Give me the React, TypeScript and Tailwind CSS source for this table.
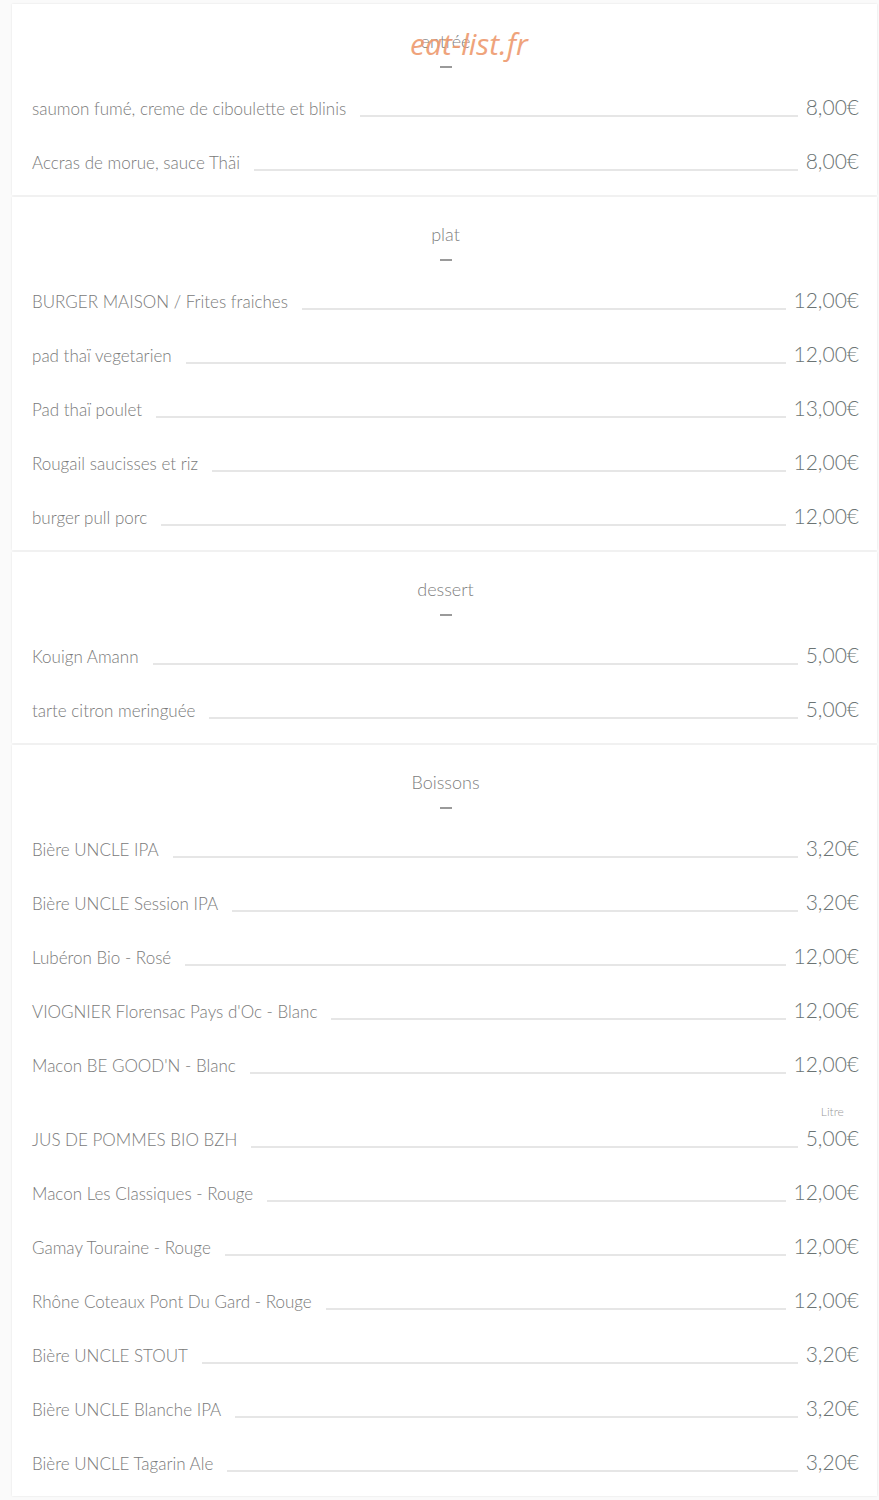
import React from "react";

type Item = { name: string; price: string; note?: string };
type Section = { title: string; items: Item[] };

const sections: Section[] = [
  {
    title: "entrée",
    items: [
      { name: "saumon fumé, creme de ciboulette et blinis", price: "8,00€" },
      { name: "Accras de morue, sauce Thäi", price: "8,00€" },
    ],
  },
  {
    title: "plat",
    items: [
      { name: "BURGER MAISON / Frites fraiches", price: "12,00€" },
      { name: "pad thaï vegetarien", price: "12,00€" },
      { name: "Pad thaï poulet", price: "13,00€" },
      { name: "Rougail saucisses et riz", price: "12,00€" },
      { name: "burger pull porc", price: "12,00€" },
    ],
  },
  {
    title: "dessert",
    items: [
      { name: "Kouign Amann", price: "5,00€" },
      { name: "tarte citron meringuée", price: "5,00€" },
    ],
  },
  {
    title: "Boissons",
    items: [
      { name: "Bière UNCLE IPA", price: "3,20€" },
      { name: "Bière UNCLE Session IPA", price: "3,20€" },
      { name: "Lubéron Bio - Rosé", price: "12,00€" },
      { name: "VIOGNIER Florensac Pays d'Oc - Blanc", price: "12,00€" },
      { name: "Macon BE GOOD'N - Blanc", price: "12,00€" },
      { name: "JUS DE POMMES BIO BZH", price: "5,00€", note: "Litre" },
      { name: "Macon Les Classiques - Rouge", price: "12,00€" },
      { name: "Gamay Touraine - Rouge", price: "12,00€" },
      { name: "Rhône Coteaux Pont Du Gard - Rouge", price: "12,00€" },
      { name: "Bière UNCLE STOUT", price: "3,20€" },
      { name: "Bière UNCLE Blanche IPA", price: "3,20€" },
      { name: "Bière UNCLE Tagarin Ale", price: "3,20€" },
    ],
  },
];

function Row({ item }: { item: Item }) {
  return (
    <div
      className={`flex items-end pb-[17px] ${item.note ? "h-[74px]" : "h-[54px]"}`}
    >
      <span className="text-[17px] leading-[20px] text-[#7a7a7a] font-light whitespace-nowrap">
        {item.name}
      </span>
      <div className="flex-1 h-[2px] bg-[#e6e6e6] mb-[2px] ml-[14px] mr-[8px]" />
      <div className="flex flex-col items-center">
        {item.note && (
          <span className="text-[12px] leading-[14px] text-[#9a9a9a] font-light mb-[7px]">
            {item.note}
          </span>
        )}
        <span className="text-[21px] leading-[24px] text-[#6b7474] font-light whitespace-nowrap">
          {item.price}
        </span>
      </div>
    </div>
  );
}

function Card({ section, first }: { section: Section; first?: boolean }) {
  return (
    <div className="relative bg-white shadow-[0_0_2px_rgba(0,0,0,0.10)] pt-[25px] pb-[5px] pl-[20px] pr-[18px]">
      <div className="flex flex-col items-center">
        <span className="text-[18px] leading-[24px] text-[#808080] font-light">
          {section.title}
        </span>
        <div className="mt-[13px] w-[12px] h-[2px] bg-[#9a9a9a]" />
      </div>
      <div className="mt-[14px]">
        {section.items.map((it, i) => (
          <Row key={i} item={it} />
        ))}
      </div>
      {first && (
        <span
          className="absolute left-[398px] top-[22px] text-[30px] leading-[36px] italic text-[#ee9a6e] opacity-90"
          style={{ fontFamily: "'Open Sans', sans-serif" }}
        >
          eat-list.fr
        </span>
      )}
    </div>
  );
}

export default function App() {
  return (
    <div
      className="w-[879px] min-h-[1500px] bg-[#fafafa] pt-[4px] pl-[12px] pr-[2px]"
      style={{ fontFamily: "Lato, 'Liberation Sans', sans-serif" }}
    >
      <div className="flex flex-col gap-[2px]">
        {sections.map((s, i) => (
          <Card key={i} section={s} first={i === 0} />
        ))}
      </div>
    </div>
  );
}
